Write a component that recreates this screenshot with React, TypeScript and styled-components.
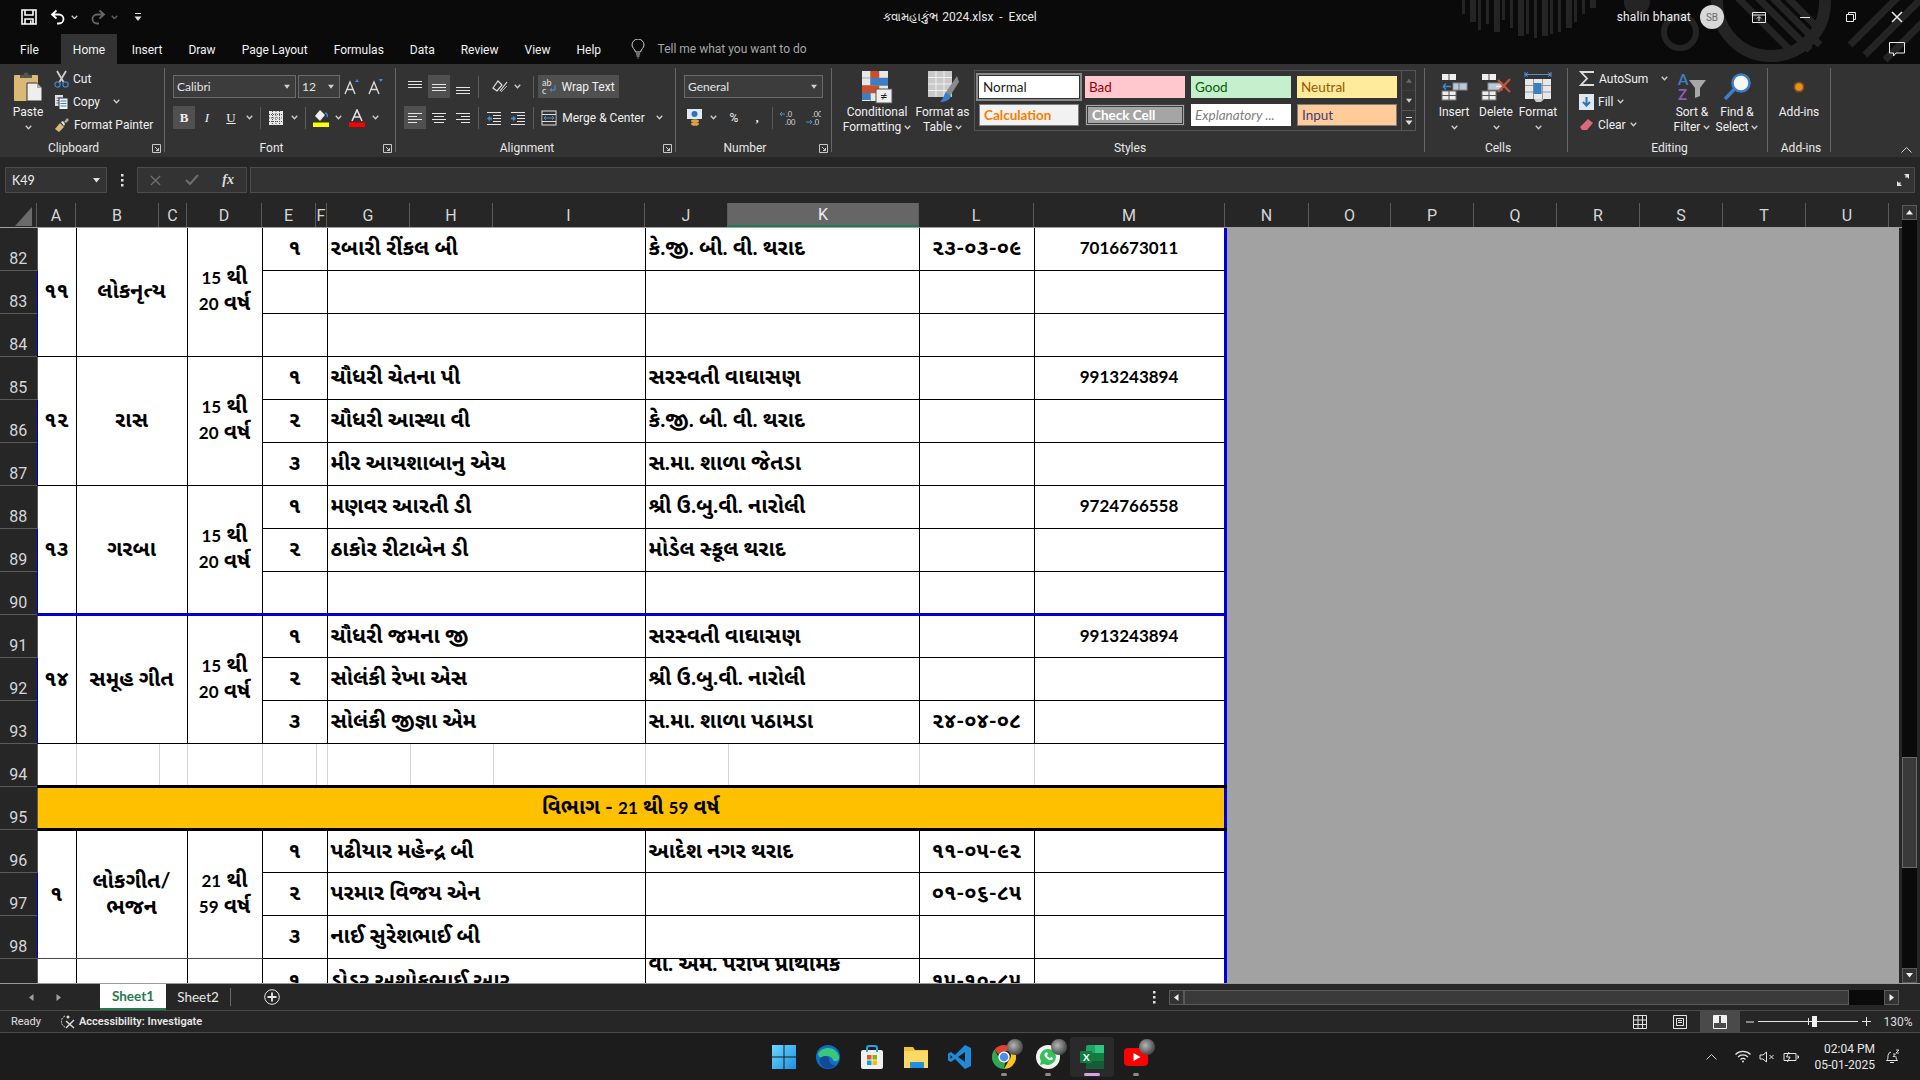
import React from 'react';
import styled, { createGlobalStyle } from 'styled-components';

const UI = '"Roboto", "Noto Sans", sans-serif';
const CELL = '"Lato", "Noto Sans Gujarati", "Noto Sans", sans-serif';

const Global = createGlobalStyle`
  html, body { margin: 0; padding: 0; width: 1920px; height: 1080px; overflow: hidden; background: #1c1c1c; }
  * { box-sizing: border-box; }
  svg { display: block; flex: none; }
`;

const Screen = styled.div`
  width: 1920px; height: 1080px; display: flex; flex-direction: column;
  font-family: ${UI}; font-size: 12px; color: #f0f0f0;
`;

/* ---------- title bar & tabs ---------- */
const Chrome = styled.header`position: relative; height: 64px; background: #0a0a0a; overflow: hidden;`;
const Pattern = styled.svg`position: absolute; top: 0; right: 0;`;
const TitleRow = styled.div`position: relative; height: 34px; display: grid; grid-template-columns: 1fr auto 1fr; align-items: center;`;
const Quick = styled.div`display: flex; align-items: center; padding-left: 20px;`;
const QuickSlot = styled.span<{ $w: number }>`width: ${p => p.$w}px; display: flex; align-items: center; justify-content: center;`;
const DocTitle = styled.div`font-size: 12px; color: #e8e8e8; white-space: pre;`;
const WinControls = styled.div`display: flex; align-items: center; justify-content: flex-end;`;
const UserName = styled.span`font-size: 12px; letter-spacing: .2px; color: #f0f0f0; margin-right: 9px;`;
const Avatar = styled.span`width: 24px; height: 24px; border-radius: 50%; background: #d8d8d8; color: #6a6a6a; font-size: 10px; display: flex; align-items: center; justify-content: center; margin-right: 12px;`;
const WinBtn = styled.span`width: 46px; display: flex; justify-content: center;`;

const TabRow = styled.nav`position: relative; height: 30px; display: flex; align-items: stretch; padding-left: 7px;`;
const Tab = styled.span<{ $active?: boolean }>`
  padding: 1px ${p => (p.$active ? 12 : 13)}px 0; display: flex; align-items: center;
  background: ${p => (p.$active ? '#333' : 'transparent')}; color: #f2f2f2;
  &:first-child { margin-right: 9px; }
  ${p => (p.$active ? 'margin-right: 1.5px;' : '')}
`;
const TellMe = styled.span`display: flex; align-items: center; gap: 13px; margin-left: 16.5px; color: #a6a6a6;`;
const CommentSlot = styled.span`margin-left: auto; padding-right: 15px; display: flex; align-items: center;`;

/* ---------- ribbon ---------- */
const Ribbon = styled.section`height: 93px; background: #333; display: flex;`;
const Group = styled.div<{ $w: number }>`width: ${p => p.$w}px; flex: none; display: flex; flex-direction: column;`;
const Rest = styled.div`flex: 1; display: flex; align-items: flex-end; justify-content: flex-end; padding: 0 8px 4px 0;`;
const Sep = styled.i`width: 1px; flex: none; margin: 4px 0 5px; background: #666;`;
const GBody = styled.div<{ $pl?: number }>`flex: 1; display: flex; align-items: flex-start; padding-left: ${p => p.$pl ?? 0}px; min-height: 0;`;
const GFoot = styled.div<{ $launch?: boolean }>`
  height: 18px; display: flex; align-items: center; font-size: 12px; color: #e8e8e8; text-align: center;
  padding: 0 3px 0 ${p => (p.$launch ? 0 : 7)}px;
`;
const FootLabel = styled.span`flex: 1;`;
const FootLauncher = styled.span`width: 14px; display: flex; justify-content: flex-end;`;

const LargeBtn = styled.div<{ $w: number }>`
  width: ${p => p.$w}px; flex: none; display: flex; flex-direction: column; align-items: center; padding-top: 6px;
  font-size: 12px; line-height: 15px; text-align: center; white-space: nowrap;
`;
const LargeIcon = styled.span`height: 34px; display: flex; align-items: center; justify-content: center; margin-bottom: 1px;`;
const LineChev = styled.span`display: flex; align-items: center; justify-content: center; gap: 3px; height: 15px;`;

const Stack = styled.div<{ $w?: number }>`width: ${p => (p.$w ? `${p.$w}px` : 'auto')}; flex: none; display: flex; flex-direction: column; padding-top: 3px;`;
const SmallRow = styled.div`height: 23px; display: flex; align-items: center; gap: 4px; white-space: nowrap; font-size: 12px;`;
const Rows2 = styled.div`display: flex; flex-direction: column; gap: 8px; padding-top: 11px;`;
const ToolRow = styled.div`height: 23px; display: flex; align-items: center;`;
const Tool = styled.span<{ $w?: number; $on?: boolean; $ml?: number }>`
  width: ${p => p.$w ?? 22}px; height: 23px; flex: none; margin-left: ${p => p.$ml ?? 0}px; display: flex; align-items: center; justify-content: center;
  background: ${p => (p.$on ? '#505050' : 'transparent')}; font-size: 12px; gap: 5px; white-space: nowrap;
`;
const BoldLetter = styled.span<{ $style?: string; $u?: boolean }>`
  font-family: "Liberation Serif", serif; font-weight: ${p => (p.$style === 'b' ? 700 : 400)}; font-style: ${p => (p.$style === 'i' ? 'italic' : 'normal')};
  text-decoration: ${p => (p.$u ? 'underline' : 'none')}; font-size: 13px;
`;
const ToolSep = styled.i`width: 1px; height: 22px; flex: none; margin: 0 4px; background: #5c5c5c;`;
const Select = styled.div<{ $w: number; $ml?: number }>`
  width: ${p => p.$w}px; height: 23px; flex: none; margin-left: ${p => p.$ml ?? 0}px; background: #3c3c3c; border: 1px solid #6a6a6a;
  display: flex; align-items: center; justify-content: space-between; padding: 0 5px 0 3px; font-family: "Lato", sans-serif; font-size: 12px; color: #e4e4e4;
`;
const Gallery = styled.div`
  margin: 6px 0 0 2px; height: 61px; display: flex; border: 1px solid #555;
`;
const Chips = styled.div`display: grid; grid-template-columns: repeat(4, 100px); grid-auto-rows: 22px; gap: 6px; padding: 5px 4px;`;
const ScrollCol = styled.div`width: 14px; display: flex; flex-direction: column; border-left: 1px solid #555;`;
const ScrollCell = styled.span<{ $off?: boolean }>`flex: 1; display: flex; align-items: center; justify-content: center; border-bottom: 1px solid #555; opacity: ${p => (p.$off ? 0.35 : 1)}; &:last-child { border-bottom: 0; }`;
const chipStyles: Record<string, string> = {
  normal: 'background:#fff;color:#222;outline:2px solid #8a8a8a;outline-offset:1px;',
  bad: 'background:#ffc7ce;color:#9c0006;',
  good: 'background:#c6efce;color:#006100;',
  neutral: 'background:#ffeb9c;color:#9c5700;',
  calc: 'background:#f2f2f2;color:#fa7d00;font-weight:700;border:1px solid #7f7f7f;',
  check: 'background:#a5a5a5;color:#fff;font-weight:700;border:3px double #3f3f3f;',
  expl: 'background:#fff;color:#7f7f7f;font-style:italic;',
  input: 'background:#ffcc99;color:#3f3f76;border:1px solid #7f7f7f;',
};
const Chip = styled.span<{ $k: string }>`
  display: flex; align-items: center; padding-left: 4px; font-family: "Lato", sans-serif; font-size: 13.5px; white-space: nowrap;
  ${p => chipStyles[p.$k]}
`;

/* ---------- formula bar ---------- */
const Formula = styled.section`height: 46px; background: #262626; padding: 10px 5px 0; display: flex; align-items: flex-start;`;
const NameBox = styled.div`width: 102px; height: 26px; background: #333; border: 1px solid #4c4c4c; display: flex; align-items: center; justify-content: space-between; padding: 0 6px; font-family: "Lato", sans-serif; font-size: 12.5px;`;
const FxDots = styled.span`width: 30px; height: 26px; display: flex; align-items: center; justify-content: center;`;
const FxBox = styled.div`width: 110px; height: 26px; background: #333; border: 1px solid #4c4c4c; display: flex; align-items: center; justify-content: space-between; padding: 0 12px;`;
const FxText = styled.span`font-family: "Liberation Serif", serif; font-style: italic; font-weight: 700; font-size: 14px; color: #ddd;`;
const FormulaInput = styled.div`flex: 1; margin-left: 3px; height: 26px; background: #333; border: 1px solid #4c4c4c; display: flex; align-items: center; justify-content: flex-end; padding-right: 4px;`;

/* ---------- grid ---------- */
const GridZone = styled.section`height: 780px; display: flex; background: #262626;`;
const GridMain = styled.div`width: 1902px; display: flex; flex-direction: column;`;
const HeaderRow = styled.div`height: 25px; display: flex; background: #262626; border-bottom: 1px solid #a0a0a0;`;
const Corner = styled.span`width: 37px; flex: none; border-right: 1px solid #5a5a5a; display: flex; align-items: flex-end; justify-content: flex-end; padding: 0 4px 1px 0;`;
const ColHead = styled.span<{ $w: number; $sel?: boolean }>`
  width: ${p => p.$w}px; flex: none; display: flex; align-items: center; justify-content: center; font-size: 16px; color: #d6d6d6;
  border-right: 1px solid #5a5a5a;
  ${p => (p.$sel ? 'background:#666;border-bottom:2px solid #1f7a4d;color:#eee;' : '')}
`;
const SheetBody = styled.div`flex: 1; display: flex; overflow: hidden;`;
const SheetTable = styled.table`
  width: 1225px; flex: none; table-layout: fixed; border-collapse: collapse; background: #fff; align-self: flex-start; margin-top: -1px;
`;
const Gray = styled.div`flex: 1; background: #a2a2a2; margin-right: 3px;`;
const RowHead = styled.th`
  height: 43px; padding: 0 0 1px; background: #262626; color: #d6d6d6; font-weight: 400; font-size: 16px; vertical-align: bottom; text-align: center; line-height: 21px;
  border: 1px solid #5a5a5a; border-left: 0; border-top: 0;
`;
type Edge = 'black' | 'blue' | 'heavy' | 'gray' | 'thin';
const edge: Record<Edge, string> = {
  black: '1px solid #000', blue: '3px solid #0000d0', heavy: '3px solid #000', gray: '1px solid #4a4a4a', thin: '1px solid #d4d4d4',
};
const Cell = styled.td<{ $left?: boolean; $b?: Edge; $x?: Edge; $lb?: boolean; $rb?: boolean; $top?: boolean }>`
  padding: 0 0 ${p => (p.$top ? 0 : 4)}px ${p => (p.$left ? 3 : 0)}px; height: 43px; overflow: hidden; white-space: nowrap; vertical-align: ${p => (p.$top ? 'top' : 'middle')};
  font-family: ${CELL}; font-weight: 700; color: #000; font-size: 21.5px; line-height: 24px; text-align: ${p => (p.$left ? 'left' : 'center')};
  border-top: 1px solid #000;
  border-bottom: ${p => edge[p.$b ?? 'black']};
  border-left: ${p => (p.$lb ? '1px solid #0000d0' : edge[p.$x ?? 'black'])};
  border-right: ${p => (p.$rb ? '3px solid #0000d0' : edge[p.$x ?? 'black'])};
`;
const Banner = styled.td`
  height: 43px; background: #ffc000; text-align: center; font-family: ${CELL}; font-weight: 700; font-size: 21px; color: #000;
  border-top: 3px solid #000; border-bottom: 3px solid #000; border-left: 1px solid #0000d0; border-right: 3px solid #0000d0;
`;
const Latin = styled.span`font-size: 17px;`;
const WrapLines = styled.div<{ $lh: number }>`white-space: pre-line; line-height: ${p => p.$lh}px;`;
const ClipText = styled.div`margin-top: -8px; height: 24px;`;
const LowText = styled.div`margin-top: 4px;`;

const VBar = styled.aside`width: 18px; display: flex; flex-direction: column; padding-right: 3px;`;
const VTrack = styled.div`flex: 1; background: #0a0a0a; display: flex; flex-direction: column; padding-top: 537px;`;
const VThumb = styled.div`height: 111px; background: #3a3a3a; border: 1px solid #6a6a6a;`;
const ArrowBtn = styled.span<{ $h?: number; $w?: number }>`
  height: ${p => p.$h ?? 15}px; width: ${p => (p.$w ? `${p.$w}px` : 'auto')}; flex: none; display: flex; align-items: center; justify-content: center; background: #333; border: 1px solid #5a5a5a;
`;
const VTopGap = styled.div`height: 2px;`;

/* ---------- sheet bar ---------- */
const SheetBar = styled.section`height: 27px; background: #262626; display: flex; align-items: stretch; border-top: 1px solid #9a9a9a;`;
const NavArrows = styled.div`width: 100px; display: flex; align-items: center; gap: 20px; padding-left: 28px;`;
const SheetTab = styled.span<{ $on?: boolean }>`
  display: flex; align-items: center; justify-content: center; width: ${p => (p.$on ? 66 : 64)}px; font-family: "Lato", sans-serif; font-size: 13.5px;
  ${p => (p.$on ? 'background:#fff;color:#1f7a4d;font-weight:700;border-bottom:2px solid #1f7a4d;' : 'color:#e6e6e6;')}
`;
const TabSep = styled.i`width: 1px; margin: 4px 0; background: #6a6a6a;`;
const AddSheet = styled.span`margin-left: 33px; display: flex; align-items: center;`;
const HDots = styled.span`margin-left: auto; display: flex; align-items: center; padding-right: 13px;`;
const HScroll = styled.div`width: 730px; margin-right: 21px; display: flex; align-items: center;`;
const HThumb = styled.div`width: 665px; height: 15px; background: #3a3a3a; border: 1px solid #5a5a5a;`;
const HTrack = styled.div`flex: 1; height: 15px; background: #0a0a0a;`;

/* ---------- status ---------- */
const Status = styled.section`height: 23px; background: #262626; display: flex; align-items: center; border-top: 1px solid #4a4a4a; border-bottom: 1px solid #4a4a4a; font-size: 11px;`;
const Ready = styled.span`margin-left: 11px; color: #e0e0e0;`;
const A11y = styled.span`margin-left: 19px; display: flex; align-items: center; gap: 3px; font-weight: 600; color: #e8e8e8;`;
const StatusRight = styled.div`margin-left: auto; display: flex; align-items: center; height: 100%; padding-right: 2px;`;
const ViewBtn = styled.span<{ $on?: boolean }>`width: 40px; height: 100%; display: flex; align-items: center; justify-content: center; background: ${p => (p.$on ? '#4a4a4a' : 'transparent')};`;
const ZoomGroup = styled.div`display: flex; align-items: center; margin-left: 6px; gap: 4px;`;
const Slider = styled.span`position: relative; width: 100px; height: 1px; background: #e6e6e6;`;
const SliderThumb = styled.i`position: absolute; left: 54px; top: -5px; width: 5px; height: 11px; background: #f0f0f0;`;
const SliderTick = styled.i`position: absolute; left: 50px; top: -3px; width: 1px; height: 7px; background: #e6e6e6;`;
const ZoomPct = styled.span`width: 40px; text-align: center; font-size: 12px; color: #dcdcdc; margin-left: 7px;`;

/* ---------- taskbar ---------- */
const Taskbar = styled.footer`position: relative; flex: 1; background: #1c1c1c; display: flex; align-items: center; justify-content: center;`;
const TaskIcon = styled.span<{ $on?: boolean }>`
  position: relative; width: 44px; height: 40px; display: flex; align-items: center; justify-content: center; border-radius: 4px;
  background: ${p => (p.$on ? '#2a2a2a' : 'transparent')};
`;
const Badge = styled.i`position: absolute; top: 2px; right: 3px; width: 16px; height: 16px; border-radius: 50%; background: radial-gradient(circle at 40% 40%, #b5b5b5, #4a4a4a 70%);`;
const RunDot = styled.i<{ $on?: boolean }>`position: absolute; bottom: 1px; left: 50%; transform: translateX(-50%); height: 3px; border-radius: 2px; width: ${p => (p.$on ? 16 : 6)}px; background: ${p => (p.$on ? '#d9a1e6' : '#8a8a8a')};`;
const Tray = styled.div`position: absolute; right: 18px; top: 0; bottom: 0; display: flex; align-items: center;`;
const TraySlot = styled.span<{ $w: number }>`width: ${p => p.$w}px; display: flex; justify-content: center;`;
const Clock = styled.div`font-size: 12px; line-height: 16px; text-align: right; color: #e6e6e6; margin: 0 7px 0 10px;`;

/* ---------- icons ---------- */
const Chev = ({ c = '#d0d0d0', s = 7 }: { c?: string; s?: number }) => (
  <svg width={s} height={s * 0.7} viewBox="0 0 7 5"><path d="M.7.8 3.5 3.8 6.3.8" fill="none" stroke={c} strokeWidth="1.3" /></svg>
);
const Tri = ({ c = '#d0d0d0', d = 'down', s = 7 }: { c?: string; d?: string; s?: number }) => {
  const pts: Record<string, string> = { down: '0,1 7,1 3.5,5.5', up: '0,5.5 7,5.5 3.5,1', left: '5.5,0 5.5,7 1,3.5', right: '1.5,0 1.5,7 6,3.5' };
  return <svg width={s} height={s} viewBox="0 0 7 7"><polygon points={pts[d]} fill={c} /></svg>;
};
const Launcher = () => (
  <svg width="9" height="9" viewBox="0 0 9 9" fill="none" stroke="#c8c8c8"><path d="M.5 8.5V.5h8v8zM3 3l3.5 3.5M6.5 4v2.5H4" /></svg>
);
const SaveIcon = () => (
  <svg width="16" height="16" viewBox="0 0 16 16" fill="none" stroke="#fff" strokeWidth="1.6"><path d="M1 1h14v14H1zM4 1v5h8V1M4 15v-5h8v5" /><path d="M9 11.5h1.5V15H9z" fill="#fff" stroke="none" /></svg>
);
const UndoIcon = ({ c = '#fff' }: { c?: string }) => (
  <svg width="16" height="16" viewBox="0 0 16 16" fill="none" stroke={c} strokeWidth="1.8"><path d="M6.5 1.5 2 5.5l4.5 4M2 5.5h7a4.5 4.5 0 0 1 0 9H7" /></svg>
);
const Customize = () => (
  <svg width="8" height="10" viewBox="0 0 8 10"><path d="M1 1.5h6" stroke="#ddd" /><path d="M.5 4.5h7L4 9z" fill="#ddd" /></svg>
);
const Bulb = () => (
  <svg width="14" height="20" viewBox="0 0 14 20" fill="none" stroke="#d0d0d0"><path d="M4.5 13C4 10 1 9 1 6a6 6 0 0 1 12 0c0 3-3 4-3.5 7zM5 15h4M5.5 17h3M6.5 19h1" /></svg>
);
const CommentIcon = () => (
  <svg width="16" height="15" viewBox="0 0 16 15" fill="none" stroke="#e8e8e8"><path d="M.5.5h15v10.5H7L4.5 14v-3H.5z" /></svg>
);
const PasteIcon = () => (
  <svg width="30" height="32" viewBox="0 0 30 32"><rect x="1" y="4" width="24" height="26" rx="1" fill="#dcb876" /><path d="M7 7V4h3.500a2.500 2.500 0 0 1 5 0H19v3z" fill="#555" /><path d="M14 12h10l5 5v13H14z" fill="#eee" stroke="#333" /><path d="M24 12v5h5z" fill="#aaa" /></svg>
);
const CutIcon = () => (
  <svg width="15" height="18" viewBox="0 0 15 18" fill="none"><path d="M3 1l6.500 11M12 1 5.500 12" stroke="#cfcfcf" strokeWidth="1.800" /><circle cx="3.500" cy="14.500" r="2.600" stroke="#3f82c4" strokeWidth="1.300" /><circle cx="11.500" cy="14.500" r="2.600" stroke="#3f82c4" strokeWidth="1.300" /></svg>
);
const CopyIcon = () => (
  <svg width="15" height="16" viewBox="0 0 15 16"><rect x="1" y="1" width="8" height="11" fill="#e0e0e0" /><path d="M2.500 4h5M2.500 6.500h3M2.500 9h3" stroke="#3f82c4" /><rect x="5" y="4" width="9" height="11.500" fill="#f4f4f4" stroke="#333" /><path d="M6.500 7h6M6.500 9.500h6M6.500 12h6" stroke="#3a7fc4" /></svg>
);
const PainterIcon = () => (
  <svg width="16" height="16" viewBox="0 0 16 16"><path d="M1 12l5-6 4 4-5 5z" fill="#dcb876" /><path d="M7 5l2-1 2 3-1 2z" fill="#e8e8e8" /><path d="M10 5l3-4 2 2-3 3z" fill="#aaa" /></svg>
);
const GrowA = ({ up }: { up?: boolean }) => (
  <svg width="16" height="17" viewBox="0 0 16 17"><path d="M1 16 6 4l5 12M3 11.500h6" fill="none" stroke="#d8d8d8" strokeWidth="1.400" />
    <polygon points={up ? '11,4 15,4 13,1' : '10.500,1 15,1 12.800,4'} fill="#3f8ad0" /></svg>
);
const Borders = () => (
  <svg width="14" height="14" viewBox="0 0 14 14"><rect width="14" height="14" fill="#e8e8e8" /><path d="M3.500 0v14M7 0v14M10.500 0v14M0 3.500h14M0 7h14M0 10.500h14" stroke="#555" strokeDasharray="1 1" /></svg>
);
const FillColor = () => (
  <svg width="17" height="18" viewBox="0 0 17 18"><path d="M7 1 2 7l5 5 5-6z" fill="#f0f0f0" /><path d="M12 4c2 0 3 2 2 4" stroke="#3f8ad0" fill="none" strokeWidth="1.400" /><rect y="13.500" width="16" height="4.500" fill="#ffff00" /></svg>
);
const FontColor = () => (
  <svg width="16" height="18" viewBox="0 0 16 18"><path d="M3 12 8 1l5 11M5 8h6" fill="none" stroke="#e0e0e0" strokeWidth="1.600" /><rect y="13.500" width="16" height="4.500" fill="#ff0000" /></svg>
);
const AlignLines = ({ k }: { k: string }) => {
  const L: Record<string, number[][]> = {
    top: [[1, 1, 14], [1, 4, 14], [1, 7, 14]], mid: [[1, 4, 14], [1, 7, 14], [1, 10, 14]], bot: [[1, 7, 14], [1, 10, 14], [1, 13, 14]],
    left: [[1, 2, 14], [1, 5, 9], [1, 8, 14], [1, 11, 9]], center: [[1, 2, 14], [3, 5, 10], [1, 8, 14], [3, 11, 10]], right: [[1, 2, 14], [6, 5, 9], [1, 8, 14], [6, 11, 9]],
  };
  return <svg width="16" height="14" viewBox="0 0 16 14">{L[k].map((l, i) => <path key={i} d={`M${l[0]} ${l[1] + 0.5}h${l[2]}`} stroke="#e4e4e4" />)}</svg>;
};
const Orient = () => (
  <svg width="17" height="15" viewBox="0 0 17 15" fill="none" stroke="#e0e0e0"><path d="M1 9 6 2l4 4-5 6zM8 12 15 3" strokeWidth="1.200" /><path d="M9 13l6-6" stroke="#bbb" /></svg>
);
const Indent = ({ rev }: { rev?: boolean }) => (
  <svg width="16" height="14" viewBox="0 0 16 14"><path d="M1 1.500h14M7 4.500h8M7 7.500h8M7 10.500h8M1 13.500h14" stroke="#e4e4e4" />
    <path d={rev ? 'M1 7.500 4 4.500v2h2v2H4v2z' : 'M6 7.500 3 4.500v2H1v2h2v2z'} fill="#3f8ad0" /></svg>
);
const WrapIcon = () => (
  <svg width="14" height="16" viewBox="0 0 14 16"><text x="0" y="7" fontSize="9" fontFamily="Lato" fill="#e4e4e4">ab</text><text x="0" y="15" fontSize="9" fontFamily="Lato" fill="#e4e4e4">c</text><path d="M13 6v5H8l2-1.500M8 11l2 1.500" stroke="#4a90d9" fill="none" /></svg>
);
const MergeIcon = () => (
  <svg width="16" height="16" viewBox="0 0 16 16"><rect x="1" y="1" width="14" height="14" fill="none" stroke="#ddd" /><path d="M1 4.500h14M1 11.500h14" stroke="#ddd" /><rect x="1.500" y="5" width="13" height="6" fill="#333" /><path d="M3 8h10M3 8l2-2M3 8l2 2M13 8l-2-2M13 8l-2 2" stroke="#4a90d9" /></svg>
);
const Currency = () => (
  <svg width="16" height="18" viewBox="0 0 16 18"><rect x="0" y="0" width="15" height="10" fill="#dfeaf6" /><circle cx="7.500" cy="5" r="3" fill="#2f73b8" /><ellipse cx="8" cy="12" rx="4" ry="1.800" fill="#d9a441" /><ellipse cx="8" cy="15" rx="4" ry="1.800" fill="#d9a441" /></svg>
);
const DecBtn = ({ inc }: { inc?: boolean }) => (
  <svg width="16" height="16" viewBox="0 0 16 16"><text x={inc ? 6 : 7} y="6.500" fontSize="7.500" fontFamily="Lato" fill="#ddd">{inc ? '.0' : '.00'}</text><text x={inc ? 5 : 8} y="14.500" fontSize="7.500" fontFamily="Lato" fill="#ddd">{inc ? '.00' : '.0'}</text>
    <path d={inc ? 'M5 4H0M0 4l2-2M0 4l2 2' : 'M7 12H1M7 12l-2-2M7 12l-2 2'} stroke="#4a90d9" fill="none" /></svg>
);
const CondFmt = () => (
  <svg width="32" height="34" viewBox="0 0 32 34">
    <rect x="1" y="1" width="26" height="30" fill="#e8e8e8" />
    <path d="M1 8h26M1 15.500h26M1 23h26M9.500 1v30M18 1v30" stroke="#aaa" />
    <rect x="9.500" y="1" width="8.500" height="7" fill="#c8502e" /><rect x="9.500" y="8" width="17.500" height="7.500" fill="#3a7fc4" /><rect x="1" y="15.500" width="17" height="7.500" fill="#c8502e" /><rect x="1" y="23" width="8.500" height="7" fill="#3a7fc4" />
    <rect x="15" y="19" width="16" height="14" fill="#eee" stroke="#555" /><text x="19" y="31" fontSize="13" fontFamily="Lato" fill="#222">≠</text>
  </svg>
);
const FmtTable = () => (
  <svg width="32" height="34" viewBox="0 0 32 34">
    <rect x="1" y="1" width="24" height="26" fill="#c9c9c9" /><path d="M1 7.500h24M1 14h24M1 20.500h24M9 1v26M17 1v26" stroke="#f0f0f0" />
    <path d="M30 6 19 22l4 4 9-14z" fill="#8a8a8a" /><path d="M19 22c-2 2-2 6-6 10 5 0 10-2 11-6z" fill="#3a80c8" />
  </svg>
);
const CellsInsert = () => (
  <svg width="27" height="28" viewBox="0 0 27 28"><rect x="1" y="1" width="14" height="6" fill="#eee" /><path d="M8 1v6" stroke="#555" /><rect x="12" y="10" width="14" height="7" fill="#b7c9db" stroke="#8a8a8a" /><path d="M18 10v7" stroke="#777" /><path d="M10 13.500H2M2 13.500 5 10.500M2 13.500l3 3" stroke="#3f8ad0" strokeWidth="1.500" fill="none" /><rect x="1" y="18" width="14" height="9" fill="#eee" stroke="#777" /><path d="M8 18v9M1 22.500h14" stroke="#555" /></svg>
);
const CellsDelete = () => (
  <svg width="30" height="28" viewBox="0 0 30 28"><rect x="1" y="1" width="14" height="6" fill="#eee" /><path d="M8 1v6" stroke="#555" /><rect x="7" y="10" width="14" height="7" fill="#b7c9db" stroke="#8a8a8a" /><path d="M15 13.500h8" stroke="#eee" strokeWidth="1.500" /><path d="M17 7l12 12M29 6 17 19" stroke="#c9523a" strokeWidth="2.200" /><rect x="1" y="18" width="14" height="9" fill="#eee" stroke="#777" /><path d="M8 18v9M1 22.500h14" stroke="#555" /></svg>
);
const CellsFormat = () => (
  <svg width="28" height="30" viewBox="0 0 28 30"><path d="M1 2.500h26M1 2.500l3-2M1 2.500l3 2M27 2.500l-3-2M27 2.500l-3 2M1 0v5M27 0v5" stroke="#4a90d9" fill="none" /><rect x="1" y="7" width="26" height="20" fill="#e8e8e8" /><path d="M1 13.500h26M1 20h26M9.500 7v20M18.500 7v20" stroke="#999" /><rect x="9.500" y="11" width="8" height="11" fill="#3a7fc4" /><path d="M10 27h10l-3 3H12z" fill="#ccc" /></svg>
);
const Sigma = () => (
  <svg width="16" height="15" viewBox="0 0 16 15" fill="none" stroke="#dcdcdc" strokeWidth="1.800"><path d="M15 1H2l6 6.500L2 14h13" /></svg>
);
const FillIcon = () => (
  <svg width="15" height="16" viewBox="0 0 15 16"><rect width="15" height="16" fill="#dfe7ef" /><path d="M7.500 3v8M4 8l3.500 3.500L11 8" stroke="#2f73b8" strokeWidth="2" fill="none" /></svg>
);
const Eraser = () => (
  <svg width="15" height="14" viewBox="0 0 15 14"><path d="M9 1l5 4-6 7H3L1 9z" fill="#d96a7c" /></svg>
);
const SortFilter = () => (
  <svg width="30" height="30" viewBox="0 0 30 30"><text x="1" y="13" fontSize="15" fontFamily="Lato" fontWeight="700" fill="#3a7fc4">A</text><text x="1" y="28" fontSize="15" fontFamily="Lato" fontWeight="700" fill="#8e5bb0">Z</text><path d="M12 8h17l-6 8v8l-5 2V16z" fill="#a8a8a8" /></svg>
);
const FindIcon = () => (
  <svg width="29" height="30" viewBox="0 0 29 30"><circle cx="18" cy="11" r="8.500" fill="#f6f6f6" stroke="#3a80c8" strokeWidth="2.500" /><path d="M11.500 17 2 27" stroke="#3a80c8" strokeWidth="3.500" /></svg>
);
const AddInDot = () => (
  <svg width="12" height="12" viewBox="0 0 12 12"><circle cx="6" cy="6" r="5.500" fill="#e8890c" opacity=".35" /><circle cx="6" cy="6" r="3.800" fill="#f09010" /></svg>
);
const Collapse = () => <svg width="11" height="6" viewBox="0 0 11 6" fill="none" stroke="#d0d0d0"><path d="M.5 5.500 5.500.5l5 5" /></svg>;
const XMark = ({ c, s = 12 }: { c: string; s?: number }) => <svg width={s} height={s} viewBox="0 0 12 12" stroke={c} strokeWidth="1.500"><path d="M1 1l10 10M11 1 1 11" /></svg>;
const Tick = () => <svg width="14" height="12" viewBox="0 0 14 12" fill="none" stroke="#6e6e6e" strokeWidth="2"><path d="M1 6l4 4 8-9" /></svg>;
const Dots3 = ({ c = '#e0e0e0' }: { c?: string }) => <svg width="3" height="13" viewBox="0 0 3 13" fill={c}><rect width="2.500" height="2.500" /><rect y="5" width="2.500" height="2.500" /><rect y="10" width="2.500" height="2.500" /></svg>;
const Expand = () => <svg width="14" height="14" viewBox="0 0 14 14" fill="#e0e0e0"><path d="M13 1v5l-2-2-1 1-1-1 1-1-2-2zM1 13V8l2 2 1-1 1 1-1 1 2 2z" /></svg>;
const CornerTri = () => <svg width="17" height="19" viewBox="0 0 17 19"><polygon points="17,0 17,19 0,19" fill="#6b6b6b" /></svg>;
const PlusCircle = () => <svg width="16" height="16" viewBox="0 0 16 16" fill="none" stroke="#e8e8e8"><circle cx="8" cy="8" r="7.300" /><path d="M8 3.500v9M3.500 8h9" strokeWidth="1.800" /></svg>;
const A11yIcon = () => <svg width="16" height="15" viewBox="0 0 16 15" fill="none" stroke="#e0e0e0"><path d="M5 2a6 6 0 0 0 0 11" strokeDasharray="2 1" /><circle cx="8" cy="3" r="1.500" fill="#e0e0e0" stroke="none" /><path d="M6 7l8 7M14 6 6 14" strokeWidth="1.400" /></svg>;
const ViewNormal = () => <svg width="14" height="14" viewBox="0 0 14 14" fill="none" stroke="#e4e4e4"><path d="M.5.500h13v13H.5zM5 .500v13M9.500.500v13M.5 5h13M.5 9.500h13" /></svg>;
const ViewLayout = () => <svg width="14" height="14" viewBox="0 0 14 14" fill="none" stroke="#e4e4e4"><path d="M.5.500h13v13H.5zM3.500 3.500h7v7h-7zM5 5.500h4M5 7.500h4" /></svg>;
const ViewBreak = () => <svg width="14" height="14" viewBox="0 0 14 14"><path d="M.5.500h13v13H.5z" fill="none" stroke="#f0f0f0" /><path d="M1 1h5v7H1zM8 1h5v7H8z" fill="#f0f0f0" /></svg>;
const MinusP = () => <svg width="8" height="8" viewBox="0 0 8 8" stroke="#e4e4e4"><path d="M0 4h8" /></svg>;
const PlusP = () => <svg width="9" height="9" viewBox="0 0 9 9" stroke="#e4e4e4"><path d="M0 4.500h9M4.500 0v9" /></svg>;

/* taskbar logos */
const StartLogo = () => (
  <svg width="24" height="24" viewBox="0 0 24 24"><defs><linearGradient id="st" x1="0" y1="0" x2="1" y2="1"><stop stopColor="#6fd8fb" /><stop offset="1" stopColor="#1b8fe6" /></linearGradient></defs><path d="M0 0h11.500v11.500H0zM12.500 0H24v11.500H12.500zM0 12.500h11.500V24H0zM12.500 12.500H24V24H12.500z" fill="url(#st)" /></svg>
);
const EdgeLogo = () => (
  <svg width="24" height="24" viewBox="0 0 24 24"><circle cx="12" cy="12" r="12" fill="#0f6fc6" /><path d="M2 9c3-8 19-9 21 3 .5 5-5 5-6 3-1-4-7-5-11-3-2 1-3 0-4-3z" fill="#38c77d" /><path d="M9 23c-5-2-6-7-5-9 2-4 9-4 9 0 0 4 3 6 6 6-2 3-6 4-10 3z" fill="#134a96" /></svg>
);
const StoreLogo = () => (
  <svg width="24" height="24" viewBox="0 0 24 24"><rect x="1" y="5" width="22" height="19" rx="2" fill="#f0f0f0" /><path d="M7 7V3a2 2 0 0 1 2-2h6a2 2 0 0 1 2 2v4" fill="none" stroke="#25a5e0" strokeWidth="2" /><rect x="7" y="10" width="4.500" height="4.500" fill="#f25022" /><rect x="12.500" y="10" width="4.500" height="4.500" fill="#7fba00" /><rect x="7" y="15.500" width="4.500" height="4.500" fill="#00a4ef" /><rect x="12.500" y="15.500" width="4.500" height="4.500" fill="#ffb900" /></svg>
);
const FolderLogo = () => (
  <svg width="24" height="24" viewBox="0 0 24 24"><path d="M0 2h9l2 3h13v18H0z" fill="#f5c033" /><path d="M0 6h24v17H0z" fill="#ffd966" /><rect x="6" y="17" width="14" height="6" rx="1" fill="#1f8fe0" /></svg>
);
const VsLogo = () => (
  <svg width="24" height="24" viewBox="0 0 24 24"><path d="M17 0 7 10 3 7 0 8.500v7L3 17l4-3 10 10 6-3V3z" fill="#1f8ad8" /><path d="M17 7v10l-7-5z" fill="#1c1c1c" /><path d="M2.500 10v4l2-2z" fill="#1c1c1c" /></svg>
);
const ChromeLogo = () => (
  <svg width="24" height="24" viewBox="0 0 24 24"><path d="M12 0a12 12 0 0 1 10.400 6H12a6 6 0 0 0-5.500 3.500L2.600 4.500A12 12 0 0 1 12 0z" fill="#e5412f" /><path d="M22.400 6A12 12 0 0 1 12 24l5-9a6 6 0 0 0 0-9z" fill="#f8c51c" /><path d="M12 24A12 12 0 0 1 2.600 4.500L7 13a6 6 0 0 0 6 5z" fill="#2fa84f" /><circle cx="12" cy="12" r="5" fill="#4a8ef0" stroke="#fff" strokeWidth="1.500" /></svg>
);
const WaLogo = () => (
  <svg width="24" height="24" viewBox="0 0 24 24"><circle cx="12" cy="12" r="12" fill="#f2f2f2" /><path d="M12 4a8 8 0 0 0-7 12l-1 4 4-1a8 8 0 1 0 4-15z" fill="#34c15b" /><path d="M9 8c-2 3 3 8 7 7l1-2-2-1-1 1c-1 0-3-2-3-3l1-1-1-2z" fill="#fff" /></svg>
);
const ExcelLogo = () => (
  <svg width="24" height="24" viewBox="0 0 24 24"><rect x="6" y="0" width="18" height="24" rx="2" fill="#21a366" /><rect x="15" y="0" width="9" height="8" fill="#33c481" /><rect x="6" y="8" width="18" height="8" fill="#107c41" /><rect x="6" y="16" width="18" height="8" fill="#185c37" /><rect x="0" y="6" width="12" height="12" rx="1" fill="#107c41" /><text x="3" y="15.500" fontSize="10" fontFamily="Lato" fontWeight="700" fill="#fff">X</text></svg>
);
const YtLogo = () => (
  <svg width="24" height="18" viewBox="0 0 24 18"><rect width="24" height="18" rx="4" fill="#f00" /><path d="M9.500 5v8l7-4z" fill="#fff" /></svg>
);
const Wifi = () => <svg width="16" height="13" viewBox="0 0 16 13" fill="none" stroke="#e6e6e6" strokeWidth="1.200"><path d="M.5 4.500a10.500 10.500 0 0 1 15 0M3 7a7 7 0 0 1 10 0M5.500 9.500a3.500 3.500 0 0 1 5 0" /><circle cx="8" cy="11.500" r="1" fill="#e6e6e6" stroke="none" /></svg>;
const Mute = () => <svg width="16" height="12" viewBox="0 0 16 12" fill="none" stroke="#e6e6e6"><path d="M1 4h3l3.500-3v10L4 8H1zM10.500 4l4 4M14.500 4l-4 4" /></svg>;
const Battery = () => <svg width="16" height="12" viewBox="0 0 16 12" fill="none" stroke="#e6e6e6"><path d="M1 2.500h12v7H1zM14 5h1.500v2H14M6 1 3.500 6H7l-2.500 5" /></svg>;
const BellZ = () => <svg width="15" height="15" viewBox="0 0 15 15" fill="none" stroke="#e6e6e6"><path d="M1.500 11.500c1.500-1 1.500-3 1.500-5a4 4 0 0 1 3-3.500M1.500 11.500h11c-1-1-1.500-2-1.500-4M5 13.500h4" /><path d="M8 5h2.500L8 7.500h2.500M11 1h3l-3 3h3" strokeWidth=".9" /></svg>;

const Pat = () => (
  <Pattern width="470" height="64" viewBox="1450 0 470 64">
    <g fill="#242424">
      {[1462, 1470, 1478, 1486, 1494, 1502, 1510, 1518, 1526, 1534, 1542, 1550, 1558, 1566, 1574, 1582, 1590].map((x, i) => (
        <rect key={x} x={x} y="0" width={i % 3 === 1 ? 6 : 3} height={[14, 22, 30, 24, 32, 20, 28, 36, 34, 38, 36, 34, 32, 28, 22, 14, 8][i]} />
      ))}
      <circle cx="1637" cy="2" r="13" />
    </g>
    <g fill="none" stroke="#242424">
      <circle cx="1680" cy="32" r="16" strokeWidth="6" />
      <circle cx="1771" cy="2" r="54" strokeWidth="12" />
      <path d="M1735 -5l60 60M1750 -10l60 60M1765 -10l55 55M1780 -10l40 40" strokeWidth="7" />
      <path d="M1850 45l50-50M1865 55l55-55M1885 60l40-40" strokeWidth="7" />
    </g>
  </Pattern>
);

/* ---------- data ---------- */
const colWidths: [string, number][] = [
  ['A', 39], ['B', 83], ['C', 28], ['D', 75], ['E', 54], ['F', 11], ['G', 83], ['H', 83], ['I', 152], ['J', 83], ['K', 191], ['L', 115], ['M', 191],
  ['N', 84], ['O', 82], ['P', 83], ['Q', 83], ['R', 83], ['S', 83], ['T', 83], ['U', 83],
];
const tableCols = colWidths.slice(0, 13);

/* Latin digits are set smaller than the Gujarati text around them */
const Mixed = ({ t }: { t?: string }) => (
  <>{(t ?? '').split(/([0-9]+)/).map((s, i) => (/^[0-9]+$/.test(s) ? <Latin key={i}>{s}</Latin> : s))}</>
);

type Row = {
  no: number; n?: string; name?: string; school?: string; dob?: string; phone?: string; b?: Edge;
  group?: { a: string; b: string; d: string; span: number; bottom?: Edge };
};
const rows: Row[] = [
  { no: 82, n: '૧', name: 'રબારી રીંકલ બી', school: 'કે.જી. બી. વી. થરાદ', dob: '૨૩-૦૩-૦૯', phone: '7016673011', group: { a: '૧૧', b: 'લોકનૃત્ય', d: '15 થી\n20 વર્ષ', span: 3 } },
  { no: 83 }, { no: 84 },
  { no: 85, n: '૧', name: 'ચૌધરી ચેતના પી', school: 'સરસ્વતી વાઘાસણ', phone: '9913243894', group: { a: '૧૨', b: 'રાસ', d: '15 થી\n20 વર્ષ', span: 3 } },
  { no: 86, n: '૨', name: 'ચૌધરી આસ્થા વી', school: 'કે.જી. બી. વી. થરાદ' },
  { no: 87, n: '૩', name: 'મીર આયશાબાનુ એચ', school: 'સ.મા. શાળા જેતડા' },
  { no: 88, n: '૧', name: 'મણવર આરતી ડી', school: 'શ્રી ઉ.બુ.વી. નારોલી', phone: '9724766558', group: { a: '૧૩', b: 'ગરબા', d: '15 થી\n20 વર્ષ', span: 3, bottom: 'blue' } },
  { no: 89, n: '૨', name: 'ઠાકોર રીટાબેન ડી', school: 'મોડેલ સ્કૂલ થરાદ' },
  { no: 90, b: 'blue' },
  { no: 91, n: '૧', name: 'ચૌધરી જમના જી', school: 'સરસ્વતી વાઘાસણ', phone: '9913243894', group: { a: '૧૪', b: 'સમૂહ ગીત', d: '15 થી\n20 વર્ષ', span: 3 } },
  { no: 92, n: '૨', name: 'સોલંકી રેખા એસ', school: 'શ્રી ઉ.બુ.વી. નારોલી' },
  { no: 93, n: '૩', name: 'સોલંકી જીજ્ઞા એમ', school: 'સ.મા. શાળા પઠામડા', dob: '૨૪-૦૪-૦૮' },
];
const rowsAfter: Row[] = [
  { no: 96, n: '૧', name: 'પઢીયાર મહેન્દ્ર બી', school: 'આદેશ નગર થરાદ', dob: '૧૧-૦૫-૯૨', group: { a: '૧', b: 'લોકગીત/\nભજન', d: '21 થી\n59 વર્ષ', span: 3, bottom: 'gray' } },
  { no: 97, n: '૨', name: 'પરમાર વિજય એન', dob: '૦૧-૦૬-૮૫' },
  { no: 98, n: '૩', name: 'નાઈ સુરેશભાઈ બી' },
];

const DataRow = ({ r }: { r: Row }) => (
  <tr>
    <RowHead>{r.no}</RowHead>
    {r.group && (
      <>
        <Cell rowSpan={r.group.span} $lb $b={r.group.bottom}>{r.group.a}</Cell>
        <Cell rowSpan={r.group.span} colSpan={2} $b={r.group.bottom}><WrapLines $lh={26}>{r.group.b}</WrapLines></Cell>
        <Cell rowSpan={r.group.span} $b={r.group.bottom}><WrapLines $lh={24}><Mixed t={r.group.d} /></WrapLines></Cell>
      </>
    )}
    <Cell colSpan={2} $b={r.b}>{r.n}</Cell>
    <Cell colSpan={3} $left $b={r.b}>{r.name}</Cell>
    <Cell colSpan={2} $left $b={r.b}>{r.school}</Cell>
    <Cell $b={r.b}>{r.dob}</Cell>
    <Cell $rb $b={r.b}><Latin>{r.phone}</Latin></Cell>
  </tr>
);

const G = ({ w, label, launcher, pl, children }: { w: number; label: string; launcher?: boolean; pl?: number; children: React.ReactNode }) => (
  <Group $w={w}>
    <GBody $pl={pl}>{children}</GBody>
    <GFoot $launch={launcher}>
      <FootLabel>{label}</FootLabel>
      {launcher ? <FootLauncher><Launcher /></FootLauncher> : null}
    </GFoot>
  </Group>
);

export default function App() {
  return (
    <Screen>
      <Global />
      <Chrome>
        <Pat />
        <TitleRow>
          <Quick>
            <QuickSlot $w={18}><SaveIcon /></QuickSlot>
            <QuickSlot $w={10} />
            <QuickSlot $w={20}><UndoIcon /></QuickSlot>
            <QuickSlot $w={12}><Chev /></QuickSlot>
            <QuickSlot $w={8} />
            <QuickSlot $w={20}><svg width="16" height="16" viewBox="0 0 16 16" fill="none" stroke="#666" strokeWidth="1.800"><path d="M9.500 1.500 14 5.500l-4.500 4M14 5.500H7a4.500 4.500 0 0 0 0 9h2" /></svg></QuickSlot>
            <QuickSlot $w={12}><Chev c="#666" /></QuickSlot>
            <QuickSlot $w={14} />
            <QuickSlot $w={8}><Customize /></QuickSlot>
          </Quick>
          <DocTitle>કવામહાકુંભ 2024.xlsx  -  Excel</DocTitle>
          <WinControls>
            <UserName>shalin bhanat</UserName>
            <Avatar>SB</Avatar>
            <WinBtn><svg width="14" height="11" viewBox="0 0 14 11" fill="none" stroke="#e8e8e8"><path d="M.5.500h13v10H.5zM.5 3h13M7 9V5M5 6.500l2-2 2 2" /></svg></WinBtn>
            <WinBtn><svg width="10" height="1" viewBox="0 0 10 1"><path d="M0 .5h10" stroke="#e8e8e8" /></svg></WinBtn>
            <WinBtn><svg width="10" height="10" viewBox="0 0 10 10" fill="none" stroke="#e8e8e8"><path d="M.5 2.500h7v7h-7zM2.500 2.500v-2h7v7h-2" /></svg></WinBtn>
            <WinBtn><XMark c="#e8e8e8" /></WinBtn>
          </WinControls>
        </TitleRow>
        <TabRow>
          {['File', 'Home', 'Insert', 'Draw', 'Page Layout', 'Formulas', 'Data', 'Review', 'View', 'Help'].map(t => (
            <Tab key={t} $active={t === 'Home'}>{t}</Tab>
          ))}
          <TellMe><Bulb />Tell me what you want to do</TellMe>
          <CommentSlot><CommentIcon /></CommentSlot>
        </TabRow>
      </Chrome>

      <Ribbon>
        <G w={164} label="Clipboard" launcher pl={2}>
          <LargeBtn $w={52}>
            <LargeIcon><PasteIcon /></LargeIcon>
            <span>Paste</span>
            <LineChev><Chev /></LineChev>
          </LargeBtn>
          <Stack>
            <SmallRow><CutIcon />Cut</SmallRow>
            <SmallRow><CopyIcon />Copy&nbsp;&nbsp;&nbsp;<Chev /></SmallRow>
            <SmallRow><PainterIcon />Format Painter</SmallRow>
          </Stack>
        </G>
        <Sep />
        <G w={230} label="Font" launcher pl={8}>
          <Rows2>
            <ToolRow>
              <Select $w={123}>Calibri<Tri s={6} /></Select>
              <Select $w={42} $ml={2}>12<Tri s={6} /></Select>
              <Tool $w={24}><GrowA up /></Tool>
              <Tool $w={24}><GrowA /></Tool>
            </ToolRow>
            <ToolRow>
              <Tool $on><BoldLetter $style="b">B</BoldLetter></Tool>
              <Tool $ml={1}><BoldLetter $style="i">I</BoldLetter></Tool>
              <Tool $ml={2}><BoldLetter $u>U</BoldLetter></Tool>
              <Tool $w={14}><Chev /></Tool>
              <ToolSep />
              <Tool><Borders /></Tool>
              <Tool $w={14}><Chev /></Tool>
              <ToolSep />
              <Tool><FillColor /></Tool>
              <Tool $w={12}><Chev /></Tool>
              <Tool $ml={2}><FontColor /></Tool>
              <Tool $w={14}><Chev /></Tool>
            </ToolRow>
          </Rows2>
        </G>
        <Sep />
        <G w={279} label="Alignment" launcher pl={8}>
          <Rows2>
            <ToolRow>
              <Tool><AlignLines k="top" /></Tool>
              <Tool $ml={2} $on><AlignLines k="mid" /></Tool>
              <Tool $ml={2}><AlignLines k="bot" /></Tool>
              <ToolSep />
              <Tool $w={46}><Orient /><Chev /></Tool>
              <ToolSep />
              <Tool $w={81} $on><WrapIcon />Wrap Text</Tool>
            </ToolRow>
            <ToolRow>
              <Tool $on><AlignLines k="left" /></Tool>
              <Tool $ml={2}><AlignLines k="center" /></Tool>
              <Tool $ml={2}><AlignLines k="right" /></Tool>
              <ToolSep />
              <Tool><Indent rev /></Tool>
              <Tool $ml={2}><Indent /></Tool>
              <ToolSep />
              <Tool $w={128}><MergeIcon />Merge &amp; Center&nbsp;&nbsp;<Chev /></Tool>
            </ToolRow>
          </Rows2>
        </G>
        <Sep />
        <G w={155} label="Number" launcher pl={8}>
          <Rows2>
            <ToolRow><Select $w={139}>General<Tri s={6} /></Select></ToolRow>
            <ToolRow>
              <Tool><Currency /></Tool>
              <Tool $w={14}><Chev /></Tool>
              <Tool $ml={3} $w={22}>%</Tool>
              <Tool $ml={1} $w={22}><BoldLetter $style="b">,</BoldLetter></Tool>
              <ToolSep />
              <Tool $w={22}><DecBtn inc /></Tool>
              <Tool $w={22} $ml={3}><DecBtn /></Tool>
            </ToolRow>
          </Rows2>
        </G>
        <Sep />
        <G w={592} label="Styles" pl={9}>
          <LargeBtn $w={72}>
            <LargeIcon><CondFmt /></LargeIcon>
            <span>Conditional</span>
            <LineChev>Formatting<Chev /></LineChev>
          </LargeBtn>
          <LargeBtn $w={59}>
            <LargeIcon><FmtTable /></LargeIcon>
            <span>Format as</span>
            <LineChev>Table<Chev /></LineChev>
          </LargeBtn>
          <Gallery>
            <Chips>
              <Chip $k="normal">Normal</Chip>
              <Chip $k="bad">Bad</Chip>
              <Chip $k="good">Good</Chip>
              <Chip $k="neutral">Neutral</Chip>
              <Chip $k="calc">Calculation</Chip>
              <Chip $k="check">Check Cell</Chip>
              <Chip $k="expl">Explanatory ...</Chip>
              <Chip $k="input">Input</Chip>
            </Chips>
            <ScrollCol>
              <ScrollCell $off><Tri d="up" s={6} /></ScrollCell>
              <ScrollCell><Tri s={6} /></ScrollCell>
              <ScrollCell><Customize /></ScrollCell>
            </ScrollCol>
          </Gallery>
        </G>
        <Sep />
        <G w={142} label="Cells" pl={8}>
          <LargeBtn $w={42}><LargeIcon><CellsInsert /></LargeIcon><span>Insert</span><LineChev><Chev /></LineChev></LargeBtn>
          <LargeBtn $w={42}><LargeIcon><CellsDelete /></LargeIcon><span>Delete</span><LineChev><Chev /></LineChev></LargeBtn>
          <LargeBtn $w={42}><LargeIcon><CellsFormat /></LargeIcon><span>Format</span><LineChev><Chev /></LineChev></LargeBtn>
        </G>
        <Sep />
        <G w={199} label="Editing" pl={11}>
          <Stack $w={90}>
            <SmallRow><Sigma />AutoSum&nbsp;&nbsp;&nbsp;<Chev /></SmallRow>
            <SmallRow><FillIcon />Fill<Chev /></SmallRow>
            <SmallRow><Eraser />Clear<Chev /></SmallRow>
          </Stack>
          <LargeBtn $w={46}><LargeIcon><SortFilter /></LargeIcon><span>Sort &amp;</span><LineChev>Filter<Chev /></LineChev></LargeBtn>
          <LargeBtn $w={44}><LargeIcon><FindIcon /></LargeIcon><span>Find &amp;</span><LineChev>Select<Chev /></LineChev></LargeBtn>
        </G>
        <Sep />
        <G w={62} label="Add-ins">
          <LargeBtn $w={62}><LargeIcon><AddInDot /></LargeIcon><span>Add-ins</span></LargeBtn>
        </G>
        <Sep />
        <Rest><Collapse /></Rest>
      </Ribbon>

      <Formula>
        <NameBox>K49<Tri s={7} c="#e0e0e0" /></NameBox>
        <FxDots><Dots3 /></FxDots>
        <FxBox><XMark c="#6e6e6e" s={11} /><Tick /><FxText>fx</FxText></FxBox>
        <FormulaInput><Expand /></FormulaInput>
      </Formula>

      <GridZone>
        <GridMain>
          <HeaderRow>
            <Corner><CornerTri /></Corner>
            {colWidths.map(([c, w]) => <ColHead key={c} $w={w} $sel={c === 'K'}>{c}</ColHead>)}
          </HeaderRow>
          <SheetBody>
            <SheetTable>
              <colgroup>
                <col width={37} />
                {tableCols.map(([c, w]) => <col key={c} width={w} />)}
              </colgroup>
              <tbody>
                {rows.map(r => <DataRow key={r.no} r={r} />)}
                <tr>
                  <RowHead>94</RowHead>
                  {tableCols.map(([c], i) => (
                    <Cell key={c} $x="thin" $b="heavy" $lb={i === 0} $rb={i === 12} />
                  ))}
                </tr>
                <tr>
                  <RowHead>95</RowHead>
                  <Banner colSpan={13}><Mixed t="વિભાગ - 21 થી 59 વર્ષ" /></Banner>
                </tr>
                {rowsAfter.map(r => <DataRow key={r.no} r={r} />)}
                <tr>
                  <RowHead>99</RowHead>
                  <Cell $lb $b="gray" />
                  <Cell colSpan={2} $b="gray" />
                  <Cell $b="gray" />
                  <Cell colSpan={2}><LowText>૧</LowText></Cell>
                  <Cell colSpan={3} $left><LowText>ડોડર અશોકભાઈ આર</LowText></Cell>
                  <Cell colSpan={2} $left $top><ClipText>વા. અમ. પરાખ પ્રાથમિક</ClipText></Cell>
                  <Cell><LowText>૧૫-૧૦-૮૫</LowText></Cell>
                  <Cell $rb />
                </tr>
              </tbody>
            </SheetTable>
            <Gray />
          </SheetBody>
        </GridMain>
        <VBar>
          <VTopGap />
          <ArrowBtn><Tri d="up" c="#f0f0f0" /></ArrowBtn>
          <VTrack><VThumb /></VTrack>
          <ArrowBtn><Tri c="#f0f0f0" /></ArrowBtn>
        </VBar>
      </GridZone>

      <SheetBar>
        <NavArrows><Tri d="left" c="#a0a0a0" /><Tri d="right" c="#a0a0a0" /></NavArrows>
        <SheetTab $on>Sheet1</SheetTab>
        <SheetTab>Sheet2</SheetTab>
        <TabSep />
        <AddSheet><PlusCircle /></AddSheet>
        <HDots><Dots3 /></HDots>
        <HScroll>
          <ArrowBtn $w={15}><Tri d="left" c="#f0f0f0" /></ArrowBtn>
          <HThumb />
          <HTrack />
          <ArrowBtn $w={15}><Tri d="right" c="#f0f0f0" /></ArrowBtn>
        </HScroll>
      </SheetBar>

      <Status>
        <Ready>Ready</Ready>
        <A11y><A11yIcon />Accessibility: Investigate</A11y>
        <StatusRight>
          <ViewBtn><ViewNormal /></ViewBtn>
          <ViewBtn><ViewLayout /></ViewBtn>
          <ViewBtn $on><ViewBreak /></ViewBtn>
          <ZoomGroup>
            <MinusP />
            <Slider><SliderTick /><SliderThumb /></Slider>
            <PlusP />
          </ZoomGroup>
          <ZoomPct>130%</ZoomPct>
        </StatusRight>
      </Status>

      <Taskbar>
        <TaskIcon><StartLogo /></TaskIcon>
        <TaskIcon><EdgeLogo /></TaskIcon>
        <TaskIcon><StoreLogo /></TaskIcon>
        <TaskIcon><FolderLogo /></TaskIcon>
        <TaskIcon><VsLogo /></TaskIcon>
        <TaskIcon><ChromeLogo /><Badge /><RunDot /></TaskIcon>
        <TaskIcon><WaLogo /><Badge /><RunDot /></TaskIcon>
        <TaskIcon $on><ExcelLogo /><RunDot $on /></TaskIcon>
        <TaskIcon><YtLogo /><Badge /><RunDot /></TaskIcon>
        <Tray>
          <TraySlot $w={38}><Collapse /></TraySlot>
          <TraySlot $w={26}><Wifi /></TraySlot>
          <TraySlot $w={22}><Mute /></TraySlot>
          <TraySlot $w={26}><Battery /></TraySlot>
          <Clock>02:04 PM<br />05-01-2025</Clock>
          <TraySlot $w={20}><BellZ /></TraySlot>
        </Tray>
      </Taskbar>
    </Screen>
  );
}
